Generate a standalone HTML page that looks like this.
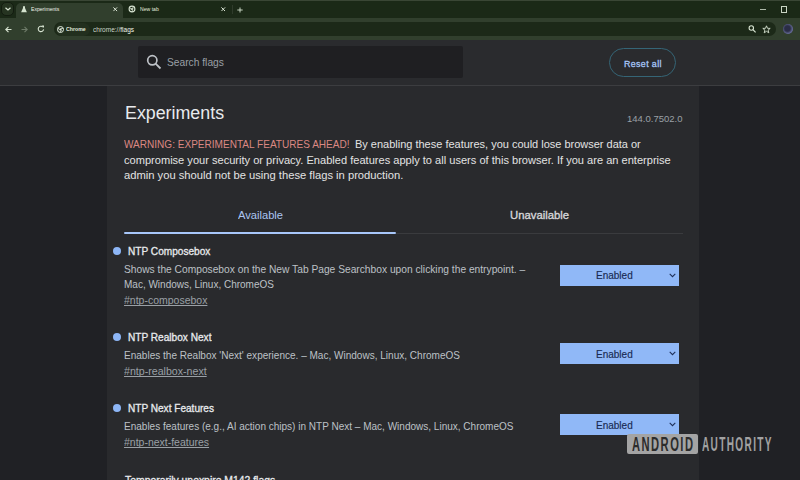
<!DOCTYPE html>
<html><head><meta charset="utf-8">
<style>
*{margin:0;padding:0;box-sizing:border-box}
html,body{width:800px;height:480px;overflow:hidden;background:#202124;font-family:"Liberation Sans",sans-serif}
.a{position:absolute}
.t{position:absolute;white-space:nowrap;line-height:1;transform-origin:0 0}
#tabstrip{position:absolute;left:0;top:0;width:800px;height:18px;background:#1b2917;border-top:1px solid #3a4635}
#toolbar{position:absolute;left:0;top:18px;width:800px;height:22px;background:#313f2d}
#header{position:absolute;left:0;top:40px;width:800px;height:46px;background:#2a2b2e;border-bottom:1px solid #3c3d40}
#left{position:absolute;left:0;top:86px;width:107px;height:394px;background:#202125}
#content{position:absolute;left:107px;top:86px;width:592px;height:394px;background:#292a2d}
#right{position:absolute;left:699px;top:86px;width:101px;height:394px;background:#202125}
.tabtxt{font-size:6.5px;color:#dfe6da}
.dot{position:absolute;width:8.4px;height:8.4px;border-radius:50%;background:#8db6f6}
.ftitle{font-size:11px;font-weight:bold;color:#e8eaed}
.fdesc{font-size:10.5px;color:#bdc1c6}
.flink{font-size:10.5px;color:#9aa0a6;text-decoration:underline}
.sel{position:absolute;left:560px;width:119px;height:21px;background:#90b8f7}
.sel .t{font-size:10px;color:#1b2a48;left:36px;top:7px}
.sel svg{position:absolute;left:109px;top:8px}
.warn{font-size:11px;color:#e3e3e3}
</style></head><body>
<div id="tabstrip"></div>
<div id="toolbar"></div>
<div id="header"></div>
<div id="left"></div>
<div id="content"></div>
<div id="right"></div>

<!-- tab strip -->
<div class="a" style="left:1px;top:2px;width:13px;height:14px;border-radius:5px;background:#263421;border:1px solid #131c10"></div>
<svg class="a" style="left:5px;top:7px" width="6" height="4" viewBox="0 0 6 4"><path d="M0.5 0.8 L3 3 L5.5 0.8" stroke="#d8e4d2" stroke-width="1.2" fill="none"/></svg>
<div class="a" style="left:16px;top:3px;width:107px;height:15px;background:#313f2d;border-radius:5px 5px 0 0"></div>
<svg class="a" style="left:20.5px;top:6px" width="6" height="6.5" viewBox="0 0 6 6.5"><path d="M2 0.3 H4 V2 L5.9 6.2 H0.1 L2 2 Z" fill="#d5e3cf"/></svg>
<svg class="a" style="left:113px;top:7px" width="4.5" height="4.5" viewBox="0 0 4.5 4.5"><path d="M0.4 0.4 L4.1 4.1 M4.1 0.4 L0.4 4.1" stroke="#dce6d6" stroke-width="1"/></svg>
<svg class="a" style="left:128.4px;top:5.2px" width="8" height="8" viewBox="0 0 8 8"><circle cx="4" cy="4" r="2.9" fill="none" stroke="#d8e4d2" stroke-width="1.1"/><circle cx="4" cy="4" r="1.1" fill="#d8e4d2"/><path d="M4 2.9 H6.6 M3.1 4.6 L1.8 2.3 M4.9 4.6 L3.6 6.9" stroke="#d8e4d2" stroke-width="0.7"/></svg>
<svg class="a" style="left:221.3px;top:6.8px" width="4.5" height="4.5" viewBox="0 0 4.5 4.5"><path d="M0.4 0.4 L4.1 4.1 M4.1 0.4 L0.4 4.1" stroke="#dce6d6" stroke-width="1"/></svg>
<div class="a" style="left:231.5px;top:5px;width:1px;height:9px;background:#2f3b2b"></div>
<svg class="a" style="left:237px;top:6.5px" width="6" height="6" viewBox="0 0 6 6"><path d="M3 0.5 V5.5 M0.3 3 H5.7" stroke="#d8e4d2" stroke-width="0.9"/></svg>
<div class="a" style="left:760px;top:9px;width:6px;height:1px;background:#aeb9a9"></div>
<div class="a" style="left:780.5px;top:6px;width:6.5px;height:6.5px;border:1px solid #c9d4c3"></div>

<!-- toolbar -->
<svg class="a" style="left:5px;top:26px" width="7" height="7" viewBox="0 0 7 7"><path d="M6.5 3.5 H1 M3.5 0.8 L0.8 3.5 L3.5 6.2" stroke="#d8e4d2" stroke-width="1.1" fill="none"/></svg>
<svg class="a" style="left:21px;top:26px" width="7" height="7" viewBox="0 0 7 7"><path d="M0.5 3.5 H6 M3.5 0.8 L6.2 3.5 L3.5 6.2" stroke="#6d7a68" stroke-width="1.1" fill="none"/></svg>
<svg class="a" style="left:37px;top:25px" width="8" height="8" viewBox="0 0 8 8"><path d="M6.6 4.4 A2.7 2.7 0 1 1 5.8 2" stroke="#d8e4d2" stroke-width="1.1" fill="none"/><path d="M4.6 0.6 H7 V3 Z" fill="#d8e4d2"/></svg>
<div class="a" style="left:54px;top:22px;width:722px;height:14px;border-radius:7px;background:#1c2918"></div>
<div class="a" style="left:55.5px;top:22.5px;width:34px;height:13px;border-radius:6.5px;background:#222f1e"></div>
<svg class="a" style="left:57px;top:25.8px" width="7" height="7" viewBox="0 0 7 7"><circle cx="3.5" cy="3.5" r="3" fill="none" stroke="#dfe8da" stroke-width="1"/><circle cx="3.5" cy="3.5" r="1.1" fill="#dfe8da"/><path d="M3.5 2.4 H6.4 M2.5 4 L1 1.6 M4.5 4 L3 6.4" stroke="#dfe8da" stroke-width="0.8"/></svg>
<svg class="a" style="left:748px;top:25px" width="9" height="9" viewBox="0 0 9 9"><circle cx="3.3" cy="3" r="2.2" fill="none" stroke="#d8e4d2" stroke-width="1.1"/><path d="M4.9 4.7 L7.6 7.4" stroke="#d8e4d2" stroke-width="1.2"/></svg>
<svg class="a" style="left:762px;top:24.5px" width="9" height="9" viewBox="0 0 9 9"><path d="M4.5 0.8 L5.5 3.3 L8.2 3.4 L6.1 5.1 L6.8 7.8 L4.5 6.3 L2.2 7.8 L2.9 5.1 L0.8 3.4 L3.5 3.3 Z" fill="none" stroke="#d8e4d2" stroke-width="0.9"/></svg>
<div class="a" style="left:783px;top:24px;width:10px;height:10px;border-radius:50%;background:radial-gradient(circle at 45% 45%,#2a2d45 35%,#6a6fa0 70%,#1e2236 100%)"></div>

<!-- header -->
<div class="a" style="left:138px;top:46px;width:325px;height:32px;background:#1f1f22;border-radius:2px"></div>
<svg class="a" style="left:146px;top:54.3px" width="16" height="16" viewBox="0 0 16 16"><circle cx="6.3" cy="6.3" r="4.6" fill="none" stroke="#bdc1c6" stroke-width="1.7"/><path d="M9.6 9.6 L14.5 14.5" stroke="#bdc1c6" stroke-width="1.8"/></svg>
<div class="a" style="left:609px;top:48px;width:67px;height:29px;border-radius:14.5px;border:1px solid #356576"></div>

<!-- content -->

<div class="a" style="left:124px;top:232px;width:272px;height:2px;background:#a8c7fa;border-radius:1px"></div>
<div class="a" style="left:396px;top:233px;width:287px;height:1px;background:#3a3b3e"></div>

<!-- flag 1 -->
<div class="dot" style="left:112.5px;top:246.6px"></div>
<div class="sel" style="top:265px"><svg width="7" height="5" viewBox="0 0 7 5"><path d="M0.7 0.9 L3.5 3.7 L6.3 0.9" stroke="#1e2f58" stroke-width="1.05" fill="none"/></svg></div>

<!-- flag 2 -->
<div class="dot" style="left:112.5px;top:333px"></div>
<div class="sel" style="top:343px"><svg width="7" height="5" viewBox="0 0 7 5"><path d="M0.7 0.9 L3.5 3.7 L6.3 0.9" stroke="#1e2f58" stroke-width="1.05" fill="none"/></svg></div>

<!-- flag 3 -->
<div class="dot" style="left:112.5px;top:403.9px"></div>
<div class="sel" style="top:414px"><svg width="7" height="5" viewBox="0 0 7 5"><path d="M0.7 0.9 L3.5 3.7 L6.3 0.9" stroke="#1e2f58" stroke-width="1.05" fill="none"/></svg></div>


<!-- watermark -->
<div class="a" style="left:626.5px;top:434.3px;width:71px;height:19.3px;border-radius:2px;background:#a4a4a4"></div>
<div class="t" id="tab1" style="left:31.33px;top:6.25px;font-size:6.2px;color:#eef3ea;transform:scaleX(0.8209);">Experiments</div>
<div class="t" id="tab2" style="left:140.00px;top:6.25px;font-size:6.2px;color:#e3e9df;transform:scaleX(0.8257);">New tab</div>
<div class="t" id="chip" style="left:65.97px;top:27.06px;font-size:5.6px;font-weight:bold;color:#e3ebde;transform:scaleX(0.9300);">Chrome</div>
<div class="t" id="url" style="left:92.97px;top:25.77px;font-size:7px;color:#eef3ea;transform:scaleX(0.9333);"><span style="color:#cdd6c8">chrome://</span>flags</div>
<div class="t" id="search" style="left:167.04px;top:57.31px;font-size:10.5px;color:#9aa0a6;transform:scaleX(0.9749);">Search flags</div>
<div class="t" id="reset" style="left:623.80px;top:58.67px;font-size:9.6px;-webkit-text-stroke:0.3px #a8c7fa;color:#a8c7fa;letter-spacing:0.4px;transform:scaleX(0.9239);">Reset all</div>
<div class="t" id="exp" style="left:124.60px;top:103.76px;font-size:18px;color:#e8eaed;transform:scaleX(0.9900);">Experiments</div>
<div class="t" id="ver" style="left:627.00px;top:113.67px;font-size:9.6px;color:#9aa0a6;transform:scaleX(0.9917);">144.0.7502.0</div>
<div class="t" id="w1a" style="left:124.16px;top:139.29px;font-size:11px;color:#dc8883;transform:scaleX(0.9134);">WARNING: EXPERIMENTAL FEATURES AHEAD!</div>
<div class="t" id="w1b" style="left:354.60px;top:139.29px;font-size:11px;color:#e3e3e3;transform:scaleX(0.9986);">By enabling these features, you could lose browser data or</div>
<div class="t" id="w2" style="left:124.20px;top:154.69px;font-size:11px;color:#e3e3e3;transform:scaleX(1.0063);">compromise your security or privacy. Enabled features apply to all users of this browser. If you are an enterprise</div>
<div class="t" id="w3" style="left:124.20px;top:170.09px;font-size:11px;color:#e3e3e3;transform:scaleX(1.0171);">admin you should not be using these flags in production.</div>
<div class="t" id="avail" style="left:237.94px;top:209.67px;font-size:11.5px;color:#abc5f2;transform:scaleX(0.9690);">Available</div>
<div class="t" id="unavail" style="left:510.00px;top:209.67px;font-size:11.5px;-webkit-text-stroke:0.35px #d6d7d9;color:#d6d7d9;transform:scaleX(0.9845);">Unavailable</div>
<div class="t" id="f1t" style="left:127.99px;top:246.31px;font-size:10.5px;-webkit-text-stroke:0.3px #e8eaed;color:#e8eaed;transform:scaleX(0.9623);">NTP Composebox</div>
<div class="t" id="f1d1" style="left:124.39px;top:264.13px;font-size:10.6px;color:#bdc1c6;transform:scaleX(0.9654);">Shows the Composebox on the New Tab Page Searchbox upon clicking the entrypoint. –</div>
<div class="t" id="f1d2" style="left:124.38px;top:279.03px;font-size:10.6px;color:#bdc1c6;transform:scaleX(0.9432);">Mac, Windows, Linux, ChromeOS</div>
<div class="t" id="f1l" style="left:124.41px;top:296.04px;font-size:10px;color:#9aa0a6;text-decoration:underline;text-decoration-skip-ink:none;transform:scaleX(1.0490);">#ntp-composebox</div>
<div class="t" id="s1" style="left:596.20px;top:270.31px;font-size:10.5px;color:#182a52;-webkit-text-stroke:0.15px #182a52;transform:scaleX(0.9525);">Enabled</div>
<div class="t" id="f2t" style="left:127.99px;top:332.31px;font-size:10.5px;-webkit-text-stroke:0.3px #e8eaed;color:#e8eaed;transform:scaleX(0.9618);">NTP Realbox Next</div>
<div class="t" id="f2d1" style="left:124.38px;top:349.93px;font-size:10.6px;color:#bdc1c6;transform:scaleX(0.9464);">Enables the Realbox 'Next' experience. – Mac, Windows, Linux, ChromeOS</div>
<div class="t" id="f2l" style="left:124.43px;top:367.44px;font-size:10px;color:#9aa0a6;text-decoration:underline;text-decoration-skip-ink:none;transform:scaleX(1.0624);">#ntp-realbox-next</div>
<div class="t" id="s2" style="left:596.20px;top:348.81px;font-size:10.5px;color:#182a52;-webkit-text-stroke:0.15px #182a52;transform:scaleX(0.9525);">Enabled</div>
<div class="t" id="f3t" style="left:127.98px;top:403.21px;font-size:10.5px;-webkit-text-stroke:0.3px #e8eaed;color:#e8eaed;transform:scaleX(0.9588);">NTP Next Features</div>
<div class="t" id="f3d1" style="left:124.38px;top:420.83px;font-size:10.6px;color:#bdc1c6;transform:scaleX(0.9453);">Enables features (e.g., AI action chips) in NTP Next – Mac, Windows, Linux, ChromeOS</div>
<div class="t" id="f3l" style="left:124.40px;top:438.14px;font-size:10px;color:#9aa0a6;text-decoration:underline;text-decoration-skip-ink:none;transform:scaleX(1.0478);">#ntp-next-features</div>
<div class="t" id="s3" style="left:596.20px;top:419.81px;font-size:10.5px;color:#182a52;-webkit-text-stroke:0.15px #182a52;transform:scaleX(0.9525);">Enabled</div>
<div class="t" id="tmp" style="left:125.00px;top:474.61px;font-size:10.5px;-webkit-text-stroke:0.3px #e8eaed;color:#e8eaed;transform:scaleX(0.9895);">Temporarily unexpire M142 flags</div>
<div class="t" id="wm1" style="left:632.00px;top:435.49px;font-size:19.5px;font-weight:bold;color:#2c2c2c;letter-spacing:2.6px;transform:scaleX(0.5719);">ANDROID</div>
<div class="t" id="wm2" style="left:702.20px;top:435.49px;font-size:19.5px;font-weight:bold;color:#a2a2a2;letter-spacing:2.6px;transform:scaleX(0.5167);">AUTHORITY</div>
</body></html>
